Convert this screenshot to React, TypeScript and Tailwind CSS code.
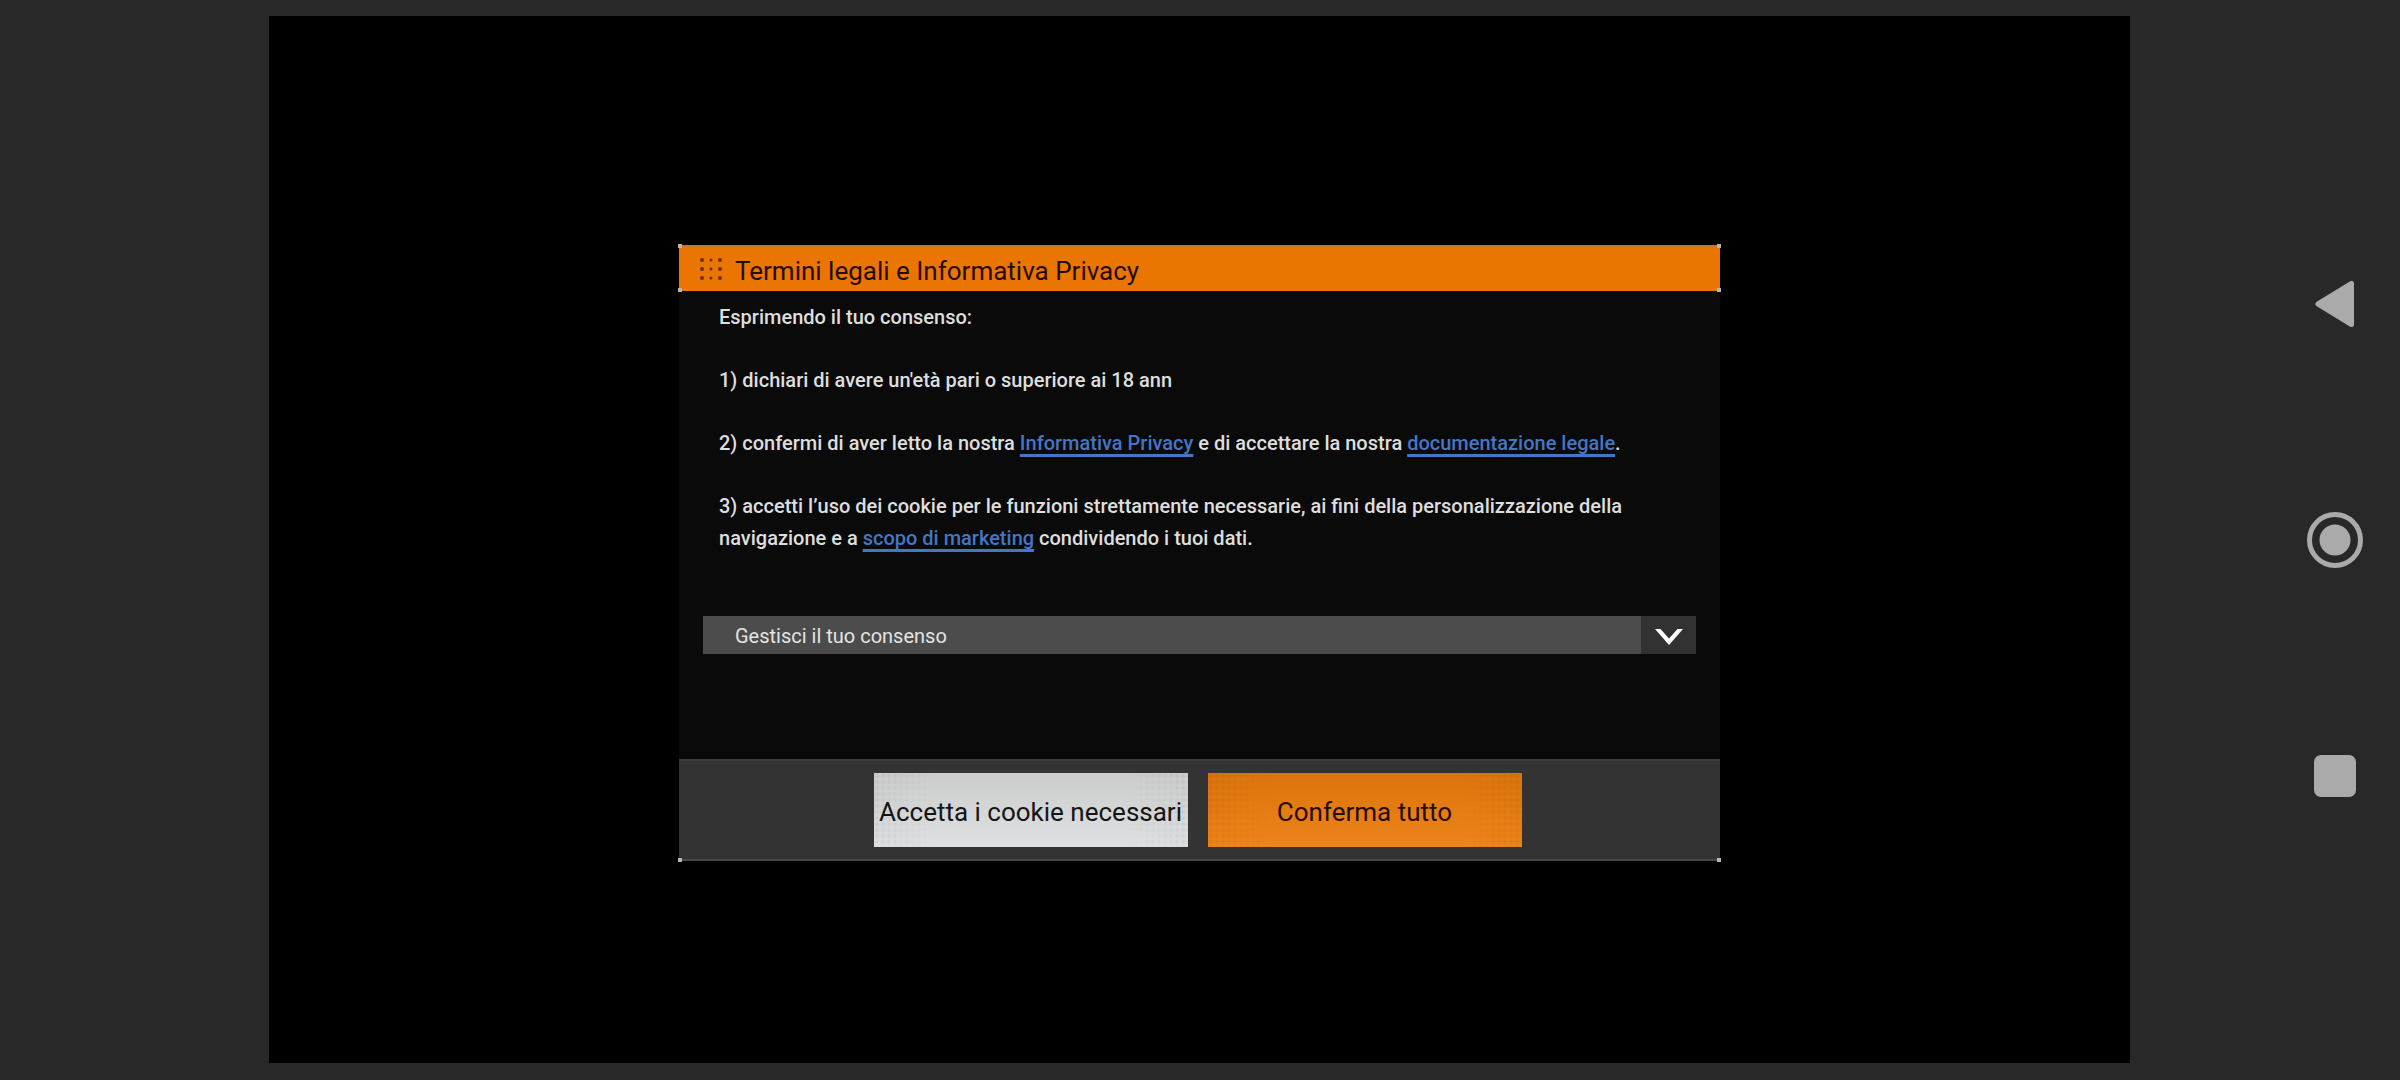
import type { ReactNode } from 'react';

const dots = [2, 11, 20];

function Corner({ className }: { className: string }) {
  return <span className={`absolute size-1 bg-[#bab5ae] ${className}`} />;
}

function TextLink({ children }: { children: ReactNode }) {
  return (
    <a
      href="#"
      className="text-[#4476c6] underline decoration-[#4476c6] decoration-3 underline-offset-4 [text-decoration-skip-ink:none]"
    >
      {children}
    </a>
  );
}

// faint mesh that fades out towards the middle of a button
function Mesh() {
  return (
    <span
      aria-hidden="true"
      className="absolute inset-0 bg-[radial-gradient(circle,rgba(0,0,0,0.05)_1px,transparent_3px)] bg-size-[6px_6px] mask-[linear-gradient(to_right,black,transparent_20%,transparent_80%,black)]"
    />
  );
}

function ConsentDialog() {
  return (
    <section role="dialog" aria-labelledby="consent-title" className="relative w-full max-w-[1041px] bg-[#0a0a0a]">
      <header className="relative flex h-[46px] items-center gap-[13px] border-t-2 border-[#c27a2c] bg-[#ea7500] pl-[21px]">
        <svg width="22" height="22" viewBox="0 0 22 22" fill="#6e2c00" aria-hidden="true">
          {dots.map((y) => dots.map((x) => <circle key={`${x}-${y}`} cx={x} cy={y} r={x === 11 ? 1.5 : 2} />))}
        </svg>
        <h1 id="consent-title" className="pt-1 text-[26px] leading-8 text-[#260c00]">
          Termini legali e Informativa Privacy
        </h1>
        <Corner className="-top-[3px] -left-px" />
        <Corner className="-top-[3px] -right-px" />
        <Corner className="-bottom-px -left-px" />
        <Corner className="-bottom-px -right-px" />
      </header>

      <div className="px-6 pt-[10px] pb-[105px]">
        <div className="flex flex-col gap-[31px] pl-4 text-xl leading-8 font-medium text-[#dedede]">
          <p>Esprimendo il tuo consenso:</p>
          <p>1) dichiari di avere un'età pari o superiore ai 18 ann</p>
          <p>
            2) confermi di aver letto la nostra <TextLink>Informativa Privacy</TextLink> e di accettare la nostra{' '}
            <TextLink>documentazione legale</TextLink>.
          </p>
          <p>
            3) accetti l’uso dei cookie per le funzioni strettamente necessarie, ai fini della personalizzazione della{' '}
            <br />
            navigazione e a <TextLink>scopo di marketing</TextLink> condividendo i tuoi dati.
          </p>
        </div>

        <button type="button" aria-expanded="false" className="mt-[62px] flex h-[38px] w-full bg-[#4b4c4b] text-left">
          <span className="flex-1 pt-1 pl-8 text-xl leading-8 text-[#e4e4e4]">Gestisci il tuo consenso</span>
          <span className="flex h-full w-[55px] items-center justify-center bg-[#323232] pt-1">
            <svg width="30" height="18" viewBox="0 0 30 18" fill="#ffffff" aria-hidden="true">
              <path d="M1 1 H6.5 L15 10.5 L23.5 1 H29 L15 17 Z" />
            </svg>
          </span>
        </button>
      </div>

      <footer className="relative flex justify-center gap-5 border-y-2 border-t-[#3c3c3c] border-b-[#474747] bg-[#333333] pt-3 pr-1 pb-3">
        <button
          type="button"
          className="relative h-[74px] w-[314px] bg-linear-to-b from-[#cbcccb] to-[#dfe0e2] pt-1 text-[26px] leading-8 whitespace-nowrap text-[#141414]"
        >
          <Mesh />
          Accetta i cookie necessari
        </button>
        <button
          type="button"
          className="relative h-[74px] w-[314px] bg-linear-to-b from-[#db740c] to-[#ee841a] pt-1 text-[26px] leading-8 whitespace-nowrap text-[#260c00]"
        >
          <Mesh />
          Conferma tutto
        </button>
        <Corner className="-bottom-[3px] -left-px" />
        <Corner className="-right-px -bottom-[3px]" />
      </footer>
    </section>
  );
}

function SystemNav() {
  return (
    <nav className="flex w-[270px] shrink-0 flex-col items-end justify-center gap-[180px] pr-[37px]">
      <button type="button" aria-label="Indietro" className="size-14">
        <svg viewBox="0 0 56 56" fill="#aaaaaa" stroke="#aaaaaa" strokeWidth="5" strokeLinejoin="round">
          <path d="M11 28 L44.5 7.5 V48.5 Z" />
        </svg>
      </button>
      <button type="button" aria-label="Home" className="size-14">
        <svg viewBox="0 0 56 56">
          <circle cx="28" cy="28" r="25.5" fill="none" stroke="#aaaaaa" strokeWidth="5" />
          <circle cx="28" cy="28" r="15.5" fill="#aaaaaa" />
        </svg>
      </button>
      <button type="button" aria-label="Recenti" className="size-14">
        <svg viewBox="0 0 56 56">
          <rect x="7" y="7" width="42" height="42" rx="7" fill="#aaaaaa" />
        </svg>
      </button>
    </nav>
  );
}

export default function App() {
  return (
    <div className="flex min-h-screen bg-[#282828] pt-4 pb-[17px] pl-[269px] font-['Roboto',sans-serif]">
      <main className="flex flex-1 items-center justify-center bg-black pt-[26px]">
        <ConsentDialog />
      </main>
      <SystemNav />
    </div>
  );
}
